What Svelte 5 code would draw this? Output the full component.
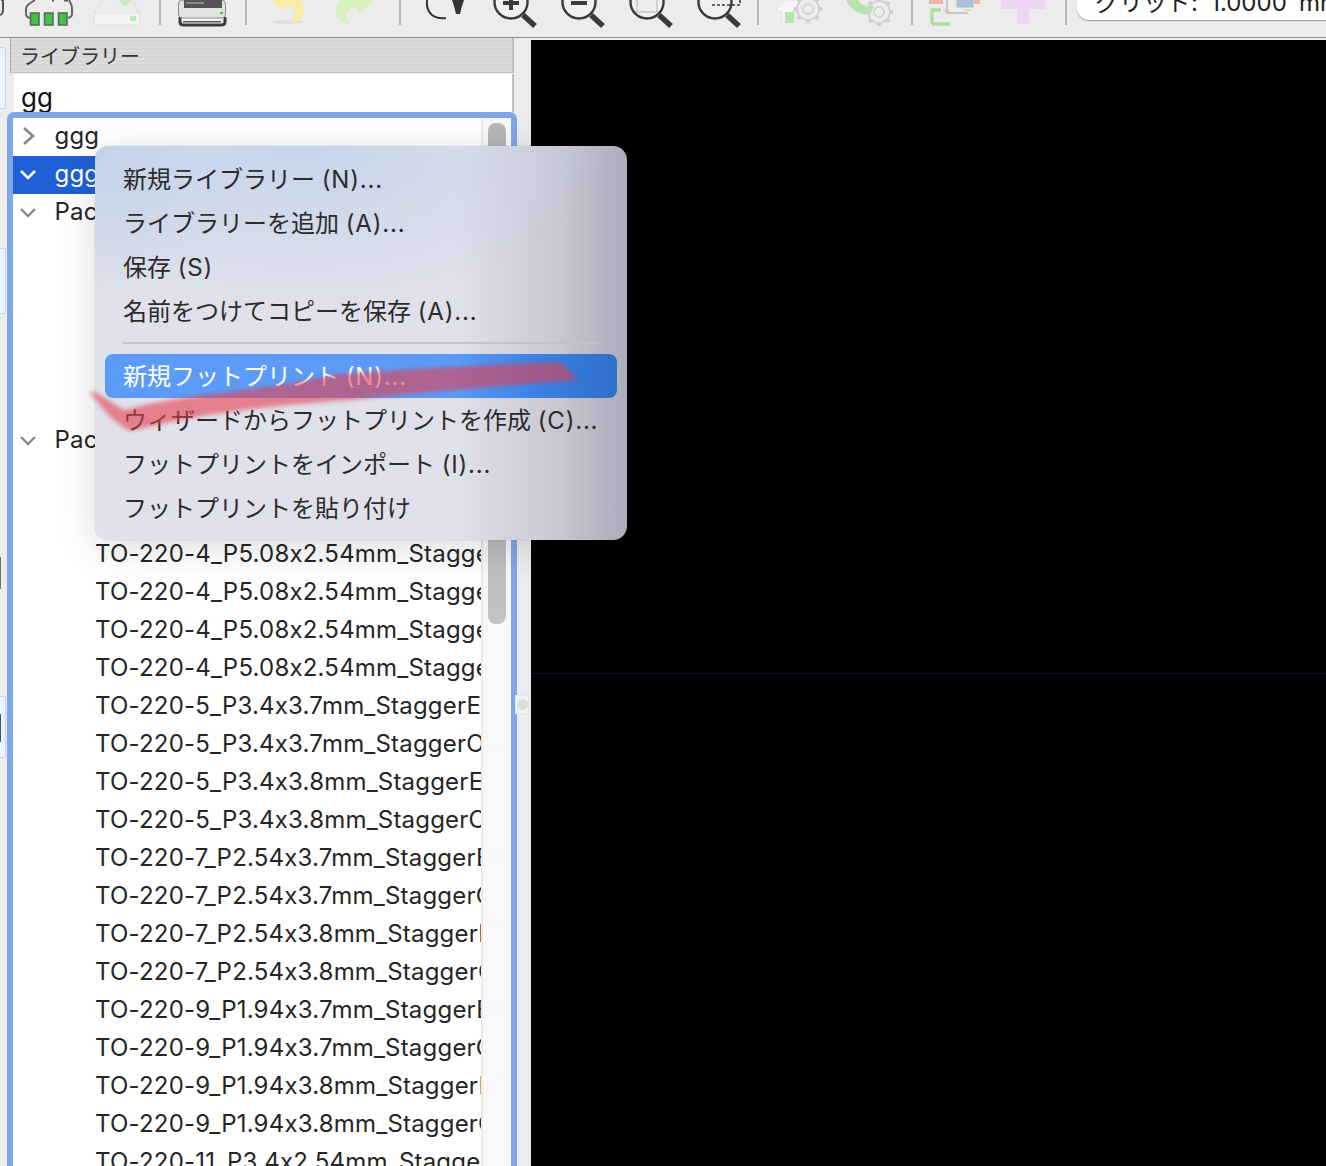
<script>
  const children = [
    'TO-220-3_Horizontal_TabDown', 'TO-220-3_Horizontal_TabUp', 'TO-220-3_Vertical',
    'TO-220-4_Horizontal_TabDown', 'TO-220-4_Vertical'
  ];
  const after = [
    'TO-220-2_Vertical', 'TO-220-3_Vertical',
    'TO-220-4_P5.08x2.54mm_StaggerEven_Lead3.8mm_Vertical',
    'TO-220-4_P5.08x2.54mm_StaggerEven_Lead5.08mm_Vertical',
    'TO-220-4_P5.08x2.54mm_StaggerOdd_Lead3.8mm_Vertical',
    'TO-220-4_P5.08x2.54mm_StaggerOdd_Lead5.08mm_Vertical',
    'TO-220-5_P3.4x3.7mm_StaggerEven_Lead3.8mm_Vertical',
    'TO-220-5_P3.4x3.7mm_StaggerOdd_Lead3.8mm_Vertical',
    'TO-220-5_P3.4x3.8mm_StaggerEven_Lead7.13mm_Vertical',
    'TO-220-5_P3.4x3.8mm_StaggerOdd_Lead7.13mm_Vertical',
    'TO-220-7_P2.54x3.7mm_StaggerEven_Lead3.8mm_Vertical',
    'TO-220-7_P2.54x3.7mm_StaggerOdd_Lead3.8mm_Vertical',
    'TO-220-7_P2.54x3.8mm_StaggerEven_Lead5.85mm_Vertical',
    'TO-220-7_P2.54x3.8mm_StaggerOdd_Lead5.85mm_Vertical',
    'TO-220-9_P1.94x3.7mm_StaggerEven_Lead3.8mm_Vertical',
    'TO-220-9_P1.94x3.7mm_StaggerOdd_Lead3.8mm_Vertical',
    'TO-220-9_P1.94x3.8mm_StaggerEven_Lead5.85mm_Vertical',
    'TO-220-9_P1.94x3.8mm_StaggerOdd_Lead5.85mm_Vertical',
    'TO-220-11_P3.4x2.54mm_StaggerEven_Lead5.84mm_Vertical'
  ];
  const menuTop = [['新規ライブラリー', '(N)...'], ['ライブラリーを追加', '(A)...'], ['保存', '(S)'], ['名前をつけてコピーを保存', '(A)...']];
  const menuBottom = [['ウィザードからフットプリントを作成', '(C)...'], ['フットプリントをインポート', '(I)...'], ['フットプリントを貼り付け', '']];
  const gearTeeth = [0, 45, 90, 135, 180, 225, 270, 315];
</script>

<div class="page">
  <header class="toolbar">
    <svg width="16" height="37" viewBox="0 0 16 37"><path d="M1 0 H3 V10 Q3 14 0 15" fill="none" stroke="#555" stroke-width="2"/></svg>
    <svg width="69" height="37" viewBox="16 0 69 37">
      <path d="M35 0 L29 4 Q26 6 26 9 V14 Q26 17 30 18 M69 0 L71 4 Q72 6 72 9 V14 Q72 17 68 18" fill="none" stroke="#666" stroke-width="2"/>
      <path d="M52 0 H54 M64 0 H68" stroke="#555" stroke-width="3"/>
      <g fill="#48c043" stroke="#55705a" stroke-width="1.6">
        <rect x="30.5" y="13" width="8.5" height="12"/><rect x="44.5" y="13" width="8.5" height="12"/><rect x="58.5" y="13" width="8.5" height="12"/>
      </g>
    </svg>
    <svg width="74" height="37" viewBox="85 0 74 37">
      <path d="M102 0 L94 13 M132 0 L140 13" stroke="#e2e2e2" stroke-width="1.5" fill="none"/>
      <rect x="94" y="13" width="46" height="12" rx="2" fill="#f4f4f4" stroke="#dfdfdf"/>
      <rect x="130" y="16" width="6" height="5" fill="#b9e8b0"/>
      <path d="M118 0 H132 L125 7 Z" fill="#cfe8b8"/>
    </svg>
    <span class="sep"></span>
    <svg width="84" height="37" viewBox="161 0 84 37">
      <path d="M180 17 V22 Q180 25 184 25 H221 Q225 25 225 22 V17" fill="#f4f4f4" stroke="#3b3b3b" stroke-width="3"/>
      <rect x="178.5" y="0" width="47" height="18" rx="4" fill="#e2e4e2" stroke="#8a8a8a"/>
      <rect x="184" y="0" width="38" height="8" fill="#555"/>
      <rect x="186" y="2" width="18" height="2" fill="#8a8a8a"/>
      <rect x="183" y="21" width="38" height="1.5" fill="#555"/>
      <rect x="220" y="12" width="3" height="2" fill="#4cc040"/>
    </svg>
    <span class="sep"></span>
    <svg width="73" height="37" viewBox="247 0 73 37">
      <ellipse cx="288" cy="22" rx="16" ry="2" fill="#dcdcdc" opacity=".7"/>
      <path d="M271 0 L283 11 L286 4 Q294 6 295 13 Q295 18 291 23 Q303 22 304 10 Q303 2 298 0 Z" fill="#f8eda2"/>
    </svg>
    <svg width="79" height="37" viewBox="320 0 79 37">
      <path d="M375 0 L358 14 L356 6 Q350 8 347 13 Q346 18 350 24 Q336 22 336 10 Q337 3 342 0 Z" fill="#d9f1bf"/>
    </svg>
    <span class="sep"></span>
    <svg width="79" height="37" viewBox="401 0 79 37">
      <path d="M427 0 Q426 10 432 15 Q437 19 446 18" fill="none" stroke="#333" stroke-width="2"/>
      <path d="M452 0 H464 L462 6 L460 14 H456 L454 6 Z" fill="#333"/>
    </svg>
    <svg width="70" height="37" viewBox="480 0 70 37">
      <circle cx="511" cy="2" r="16.5" fill="#f0f0f0" stroke="#3a3a3a" stroke-width="2.4"/>
      <path d="M511 -6 V10 M503 3 H519" stroke="#3a3a3a" stroke-width="4"/>
      <path d="M523 15 L535 26" stroke="#3a3a3a" stroke-width="5.5"/>
    </svg>
    <svg width="66" height="37" viewBox="550 0 66 37">
      <circle cx="579" cy="2" r="16.5" fill="#f0f0f0" stroke="#3a3a3a" stroke-width="2.4"/>
      <path d="M571 3 H587" stroke="#3a3a3a" stroke-width="4"/>
      <path d="M591 15 L603 26" stroke="#3a3a3a" stroke-width="5.5"/>
    </svg>
    <svg width="69" height="37" viewBox="616 0 69 37">
      <circle cx="647" cy="2" r="16.5" fill="#f0f0f0" stroke="#3a3a3a" stroke-width="2.4"/>
      <rect x="637" y="-4" width="20" height="16" fill="#eeeeee" stroke="#b4b4b4"/>
      <path d="M659 15 L671 26" stroke="#3a3a3a" stroke-width="5.5"/>
    </svg>
    <svg width="72" height="37" viewBox="685 0 72 37">
      <circle cx="715" cy="2" r="16.5" fill="#f0f0f0" stroke="#3a3a3a" stroke-width="2.4"/>
      <path d="M712 5 H740 V-1" fill="none" stroke="#3a3a3a" stroke-width="1.6" stroke-dasharray="3 2"/>
      <path d="M727 15 L739 26" stroke="#3a3a3a" stroke-width="5.5"/>
    </svg>
    <span class="sep"></span>
    <svg width="76" height="37" viewBox="759 0 76 37">
      <path d="M776 10 L786 0 H800 V8 L792 12 V22 H782 V12 Z" fill="#f6f6f6" stroke="#e4e4e4"/>
      <rect x="785" y="12" width="9" height="11" fill="#b4e6ad"/>
      <g fill="none" stroke="#cfcfcf" stroke-width="1.5">
        <circle cx="808" cy="9" r="5"/><circle cx="808" cy="9" r="11"/>
        {#each gearTeeth as a}<path d="M808 -5 V-2" stroke-width="4" transform="rotate({a} 808 9)"/>{/each}
      </g>
    </svg>
    <svg width="76" height="37" viewBox="835 0 76 37">
      <path d="M846 0 Q852 14 870 15 L874 6 Q862 8 858 0 Z" fill="#b7e3ae"/>
      <g fill="none" stroke="#cfcfcf" stroke-width="1.5">
        <circle cx="879" cy="12" r="5"/><circle cx="879" cy="12" r="11"/>
        {#each gearTeeth as a}<path d="M879 -2 V1" stroke-width="4" transform="rotate({a} 879 12)"/>{/each}
      </g>
    </svg>
    <span class="sep"></span>
    <svg width="77" height="37" viewBox="913 0 77 37">
      <rect x="929" y="0" width="14" height="4" fill="#efb4ac"/>
      <rect x="943" y="9" width="6" height="3" fill="#f6d3a9"/>
      <path d="M932 24 V10 H941 M932 24 H950" fill="none" stroke="#addfa0" stroke-width="3.5"/>
      <path d="M947 0 V13 H968" fill="none" stroke="#c6c6c6" stroke-width="2"/>
      <rect x="957" y="0" width="16" height="7" fill="#9fc2e6" stroke="#b7b7b7"/>
      <rect x="974" y="0" width="6" height="4" fill="#efb4ac"/>
      <rect x="964" y="9" width="7" height="2" fill="#f6d3a9"/>
    </svg>
    <svg width="75" height="37" viewBox="990 0 75 37">
      <path d="M1001 0 H1045 V9 H1029 V24 H1017 V9 H1001 Z" fill="#ebd6f2"/>
    </svg>
    <span class="sep"></span>
    <div class="grid-select">グリッド: 1.0000 mm</div>
  </header>

  <div class="main">
    <aside class="strip">
      <span class="strip-box first"></span>
      <span class="strip-box second"></span>
      <span class="strip-dark"></span>
      <span class="strip-box third"><i></i></span>
    </aside>

    <section class="panel">
      <div class="title">ライブラリー</div>
      <div class="search">gg</div>
      <div class="tree">
        <div class="list">
          <div class="row root">
            <svg class="chev closed" width="14" height="20" viewBox="0 0 14 20"><path d="M2 2 L11 10 L2 18" fill="none" stroke="#888" stroke-width="2.6"/></svg>
            <span>ggg</span>
          </div>
          <div class="row root selected">
            <svg class="chev" width="18" height="14" viewBox="0 0 18 14"><path d="M2 3 L9 10 L16 3" fill="none" stroke="#fff" stroke-width="2.6"/></svg>
            <span>ggg</span>
          </div>
          <div class="row root">
            <svg class="chev" width="18" height="14" viewBox="0 0 18 14"><path d="M2 3 L9 10 L16 3" fill="none" stroke="#888" stroke-width="2.4"/></svg>
            <span>Package_TO_SOT_SMD</span>
          </div>
          {#each children as c}
            <div class="row child"><span>{c}</span></div>
          {/each}
          <div class="row root">
            <svg class="chev" width="18" height="14" viewBox="0 0 18 14"><path d="M2 3 L9 10 L16 3" fill="none" stroke="#888" stroke-width="2.4"/></svg>
            <span>Package_TO_SOT_THT</span>
          </div>
          {#each after as c}
            <div class="row child"><span>{c}</span></div>
          {/each}
        </div>
        <div class="scroll"><div class="thumb"></div></div>
      </div>
    </section>

    <div class="sash"><span class="grip"><i></i></span></div>
    <main class="canvas"><div class="axis"></div></main>
  </div>

  <div class="menu">
    {#each menuTop as [label, key]}<div class="item">{label} <span class="key">{key}</span></div>{/each}
    <div class="divider"></div>
    <div class="item active">新規フットプリント <span class="key">(N)...</span></div>
    {#each menuBottom as [label, key]}<div class="item">{label} <span class="key">{key}</span></div>{/each}
  </div>

  <svg class="mark" width="520" height="90" viewBox="80 355 520 90">
    <path d="M89 392 L97 393 L124 410 Q170 398 230 392 Q290 384 340 374 Q450 366 560 362 L578 380 Q470 388 350 400 Q260 406 190 418 Q160 424 130 431 Q116 424 104 410 Z" fill="#e5404c" opacity=".6"/>
  </svg>
</div>

<style>
  :global(body) { margin: 0; background: #ececec; }
  .page {
    position: relative;
    width: 1326px;
    height: 1166px;
    overflow: hidden;
    font-family: Inter, "Noto Sans CJK JP", sans-serif;
    font-feature-settings: "calt" 0;
    background: #ececec;
    color: #252525;
  }
  .toolbar {
    display: flex;
    height: 37px;
    border-bottom: 1px solid #8c8c8c;
    overflow: hidden;
    background: #ececec;
  }
  .toolbar svg { flex: none; display: block; filter: blur(.35px); }
  .sep { flex: none; width: 2px; height: 25px; background: #b4b4b4; }
  .grid-select {
    flex: none;
    width: 300px;
    height: 20px;
    margin-left: 10px;
    padding-left: 18px;
    box-sizing: border-box;
    background: #fff;
    border-radius: 0 0 0 12px;
    box-shadow: 0 1px 1px rgba(0, 0, 0, .35);
    font-size: 24px;
    line-height: 6px;
    word-spacing: 5.5px;
    white-space: nowrap;
    color: #222;
  }
  .main { display: flex; height: 1128px; }
  .strip {
    flex: none;
    width: 7px;
    display: flex;
    flex-direction: column;
  }
  .strip-box {
    display: block;
    width: 6px;
    box-sizing: border-box;
    background: #eaf3fd;
    border: 1px solid #bcd7f6;
    border-left: 0;
    border-radius: 0 3px 3px 0;
    position: relative;
  }
  .strip-box.first { margin-top: 9px; height: 62px; }
  .strip-box.second { margin-top: 139px; height: 66px; }
  .strip-dark { display: block; width: 1px; height: 32px; margin-top: 243px; background: #777; }
  .strip-box.third { margin-top: 107px; height: 62px; }
  .strip-box.third i { position: absolute; left: 0; top: 17px; width: 1px; height: 28px; background: #555; }

  .panel { flex: none; width: 510px; display: flex; flex-direction: column; }
  .title {
    height: 35px;
    margin-left: 3px;
    margin-right: 3px;
    padding-left: 9px;
    border-left: 1px solid #aaa;
    border-right: 2px solid #bdbdbd;
    border-bottom: 1px solid #c4c4c4;
    box-sizing: border-box;
    background: repeating-linear-gradient(180deg, #dcdcdc 0 2px, #d5d5d5 2px 4px);
    font-size: 20px;
    line-height: 38px;
    color: #333;
  }
  .search {
    height: 38px;
    margin: 1px 3px 0 7px;
    padding-left: 7px;
    background: #fff;
    border-right: 2px solid #bdbdbd;
    font-size: 26px;
    line-height: 48px;
    color: #111;
  }
  .tree {
    flex: 1;
    min-height: 0;
    display: flex;
    border: 6.5px solid #7ea6e8;
    border-bottom: 0;
    border-radius: 7px 7px 0 0;
    background: #fff;
    overflow: hidden;
  }
  .list { width: 468px; flex: none; overflow: hidden; }
  .row {
    height: 38px;
    box-sizing: border-box;
    padding-bottom: 3px;
    display: flex;
    align-items: center;
    font-size: 24px;
    letter-spacing: .2px;
    white-space: nowrap;
    overflow: hidden;
  }
  .row.root { position: relative; padding-left: 41.5px; }
  .chev { position: absolute; left: 6px; top: 12px; }
  .chev.closed { left: 9px; top: 8px; }
  .row.child { padding-left: 82px; }
  .row.selected { background: #2060d6; color: #fff; }
  .scroll {
    flex: 1;
    background: #f8f8f8;
    border-left: 2px solid #e9e9e9;
    padding: 5px 5px 0 5px;
  }
  .thumb {
    height: 501px;
    border-radius: 8px;
    background: linear-gradient(180deg, #b6b6b6, #bdbdbd 85%, #c2c2c2);
  }
  .sash { flex: none; width: 14px; position: relative; }
  .grip {
    position: absolute;
    left: -2px;
    top: 657px;
    width: 14px;
    height: 19px;
    box-sizing: border-box;
    background: #f3f3f3;
    border: 1px solid #e6e6e6;
    display: grid;
    place-items: center;
  }
  .grip i { width: 11px; height: 11px; border-radius: 50%; background: #dcdcdc; }
  .canvas { flex: 1; margin-top: 2px; background: #000; position: relative; }
  .axis { position: absolute; left: 0; right: 0; top: 633px; height: 1px; background: #0c0c34; }

  .menu {
    position: absolute;
    left: 95px;
    top: 146px;
    width: 532px;
    height: 394px;
    box-sizing: border-box;
    padding: 11px 10px;
    border-radius: 14px;
    background:
      radial-gradient(ellipse 58% 42% at 38% 0, rgba(196, 212, 235, .95), rgba(196, 212, 235, 0)),
      radial-gradient(ellipse 30% 40% at 0 0, rgba(190, 208, 230, .9), rgba(190, 208, 230, 0)),
      linear-gradient(90deg, #e1e1eb 0, #e0e0ea 68%, #c8c7d3 87%, #aeabba 100%);
    box-shadow: 0 0 1px rgba(0, 0, 0, .45), 0 8px 40px rgba(0, 0, 0, .14);
    font-size: 24px;
    color: #2b2b2b;
  }
  .item {
    height: 44px;
    line-height: 46px;
    padding-left: 18px;
    white-space: nowrap;
    border-radius: 8px;
  }
  .key { letter-spacing: .8px; }
  .divider { height: 2px; margin: 9px 18px 10px; background: #c2c1cc; }
  .item.active {
    color: #fff;
    background: linear-gradient(90deg, #5c9cf8 0, #5b9bf7 68%, #3a80e4 85%, #2f70c8 100%);
  }
  .mark { position: absolute; left: 80px; top: 355px; filter: blur(2px); pointer-events: none; }
</style>
